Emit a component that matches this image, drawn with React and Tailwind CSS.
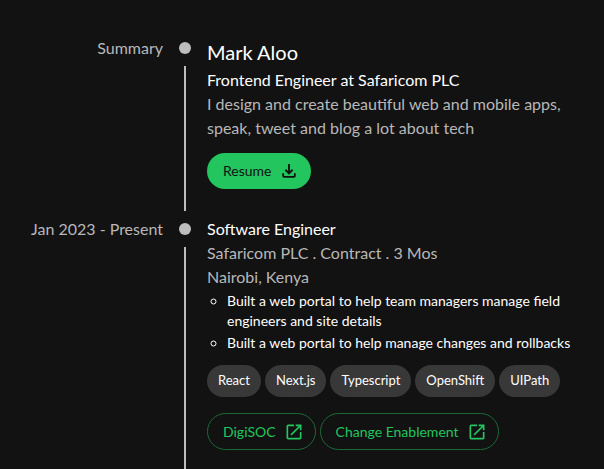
import { MdOpenInNew } from "react-icons/md";

const skills = ["React", "Next.js", "Typescript", "OpenShift", "UIPath"];
const links = ["DigiSOC", "Change Enablement"];
const duties = [
  "Built a web portal to help team managers manage field engineers and site details",
  "Built a web portal to help manage changes and rollbacks",
];

function DownloadIcon() {
  return (
    <svg className="size-5" viewBox="0 0 24 24" fill="none" stroke="currentColor" strokeWidth="2.2" aria-hidden="true">
      <path d="M12 3.5V15M7.7 10.5l4.3 4.3 4.3-4.3" />
      <path d="M5 15.5V18a1 1 0 0 0 1 1h12a1 1 0 0 0 1-1v-2.5" strokeLinecap="round" />
    </svg>
  );
}

function TimelineItem({ label, children }) {
  return (
    <li className="flex">
      <div className="w-[163px] shrink-0 pt-1.5 text-right text-[#b8b8b8]">{label}</div>
      <div className="ml-4 flex w-3 shrink-0 flex-col items-center">
        <span className="my-3 size-3 shrink-0 rounded-full bg-[#bdbdbd]" />
        <span className="w-0.5 grow bg-[#bdbdbd]" />
      </div>
      <div className="min-w-0 grow pt-1.5 pr-4 pb-[22px] pl-4">{children}</div>
    </li>
  );
}

export default function App() {
  return (
    <main className="min-h-screen bg-[#121212] pt-[30px] font-['Lato',sans-serif] text-base text-white">
      <ul>
        <TimelineItem label="Summary">
          <h1 className="text-xl leading-8">Mark Aloo</h1>
          <h2>Frontend Engineer at Safaricom PLC</h2>
          <p className="text-[#b8b8b8]">
            I design and create beautiful web and mobile apps, speak, tweet and blog a lot about tech
          </p>
          <button className="mt-[13px] flex h-9 items-center gap-2 rounded-full bg-[#22c55e] pr-3 pl-4 text-sm text-[#121212]">
            Resume
            <DownloadIcon />
          </button>
        </TimelineItem>
        <TimelineItem label="Jan 2023 - Present">
          <h2>Software Engineer</h2>
          <p className="text-[#b8b8b8]">Safaricom PLC . Contract . 3 Mos</p>
          <p className="text-[#b8b8b8]">Nairobi, Kenya</p>
          <ul className="mt-0.5 list-[circle] pl-5 text-sm">
            {duties.map((duty) => (
              <li key={duty} className="mb-0.5">
                {duty}
              </li>
            ))}
          </ul>
          <div className="mt-3 flex flex-wrap gap-1">
            {skills.map((skill) => (
              <span key={skill} className="flex h-8 items-center rounded-full bg-[#383838] px-[11px] text-[13px]">
                {skill}
              </span>
            ))}
          </div>
          <div className="mt-4 flex flex-wrap gap-1">
            {links.map((link) => (
              <a
                key={link}
                href="#"
                className="flex h-[37px] items-center gap-2 rounded-full border border-[#1a6a38] pr-[11px] pl-[15px] text-sm text-[#22c55e]"
              >
                {link}
                <MdOpenInNew className="size-5" />
              </a>
            ))}
          </div>
        </TimelineItem>
      </ul>
    </main>
  );
}
